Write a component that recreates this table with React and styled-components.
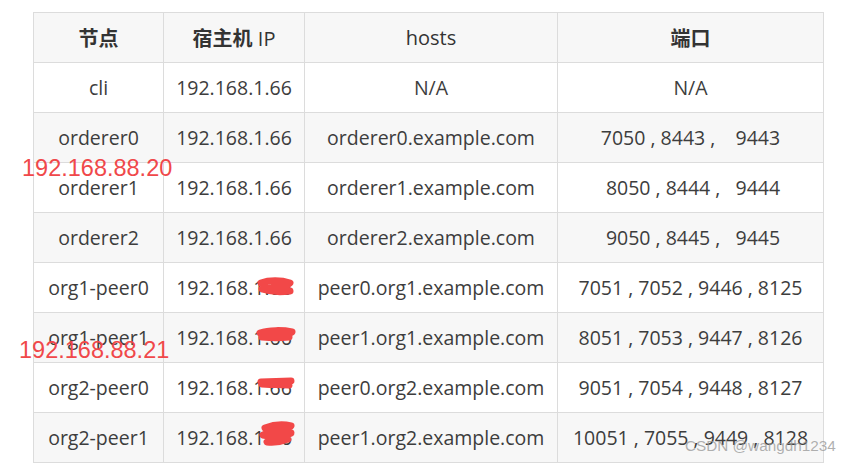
import React from "react";
import styled, { createGlobalStyle } from "styled-components";

const Global = createGlobalStyle`
  html, body { margin: 0; padding: 0; background: #fff; }
  body { font-family: "Open Sans", "Noto Sans CJK SC", sans-serif; }
`;

const Page = styled.div`
  position: relative;
  width: 855px;
  height: 465px;
  padding: 12px 0 0 33px;
  box-sizing: border-box;
  overflow: hidden;
`;

const Table = styled.table`
  border-collapse: collapse;
  table-layout: fixed;
  width: 791px;
  color: #3d3d3d;
  font-size: 19.5px;
`;

const Th = styled.th`
  height: 49px;
  padding: 0;
  border: 1px solid #dcdcdc;
  background: #f7f7f7;
  font-weight: 400;
  font-size: 20px;
  text-align: center;
  color: #333;
`;

const Cjk = styled.span`
  font-weight: 700;
  font-family: "Noto Sans CJK SC", sans-serif;
`;

const Tr = styled.tr`
  background: ${(p) => (p.$striped ? "#f7f7f7" : "#fff")};
`;

const Td = styled.td`
  height: 49px;
  padding: 0;
  border: 1px solid #dcdcdc;
  text-align: center;
  white-space: pre;
`;

const IpCell = styled.span`
  position: relative;
  display: inline-block;
  line-height: 26px;
`;

const Scribble = styled.svg`
  position: absolute;
  right: -3px;
  top: ${(p) => p.$top}px;
  width: 38px;
  height: ${(p) => p.$h}px;
  overflow: visible;
`;

const Note = styled.div`
  position: absolute;
  left: ${(p) => p.$x}px;
  top: ${(p) => p.$y}px;
  color: #f0484a;
  font-size: 23.5px;
  font-family: "Liberation Sans", Arial, sans-serif;
  line-height: 1;
`;

const Watermark = styled.div`
  position: absolute;
  left: 685px;
  top: 437px;
  color: rgba(150, 150, 150, 0.75);
  font-size: 15.3px;
  font-family: "Liberation Sans", Arial, sans-serif;
`;

const rows = [
  ["cli", "192.168.1.66", "N/A", "N/A", 0],
  ["orderer0", "192.168.1.66", "orderer0.example.com", "7050 , 8443 ,    9443", 0],
  ["orderer1", "192.168.1.66", "orderer1.example.com", " 8050 , 8444 ,   9444", 0],
  ["orderer2", "192.168.1.66", "orderer2.example.com", " 9050 , 8445 ,   9445", 0],
  ["org1-peer0", "192.168.1.66", "peer0.org1.example.com", "7051 , 7052 , 9446 , 8125", 1],
  ["org1-peer1", "192.168.1.66", "peer1.org1.example.com", "8051 , 7053 , 9447 , 8126", 2],
  ["org2-peer0", "192.168.1.66", "peer0.org2.example.com", "9051 , 7054 , 9448 , 8127", 3],
  ["org2-peer1", "192.168.1.66", "peer1.org2.example.com", "10051 , 7055 , 9449 , 8128", 4],
];

const scribbles = {
  1: { top: 3, h: 19, d: "M4 5 C12 2 24 2 33 5 C30 9 14 10 5 11 C14 14 26 14 33 13" },
  2: { top: 3, h: 14, d: "M3 5 C12 2 26 2 35 4 C30 8 16 9 5 9 C14 10 24 10 32 9" },
  3: { top: 3, h: 10, d: "M4 4 L34 3 C30 6 14 7 5 6 L32 7" },
  4: { top: -3, h: 25, d: "M8 6 C16 3 26 2 34 4 C26 8 14 10 6 13 C14 15 26 12 34 11 C26 15 16 18 10 20 C18 21 26 19 31 17" },
};

function Scrib({ k }) {
  const s = scribbles[k];
  return (
    <Scribble $top={s.top} $h={s.h} viewBox={`0 0 38 ${s.h}`}>
      <path d={s.d} fill="none" stroke="#f24848" strokeWidth="7" strokeLinecap="round" strokeLinejoin="round" />
    </Scribble>
  );
}

export default function App() {
  return (
    <>
      <Global />
      <Page>
        <Table>
          <colgroup>
            <col style={{ width: 130 }} />
            <col style={{ width: 141 }} />
            <col style={{ width: 253 }} />
            <col style={{ width: 266 }} />
          </colgroup>
          <thead>
            <tr>
              <Th><Cjk>节点</Cjk></Th>
              <Th><Cjk>宿主机</Cjk> IP</Th>
              <Th>hosts</Th>
              <Th><Cjk>端口</Cjk></Th>
            </tr>
          </thead>
          <tbody>
            {rows.map((r, i) => (
              <Tr key={r[0]} $striped={i % 2 === 1}>
                <Td>{r[0]}</Td>
                <Td>
                  <IpCell>
                    {r[1]}
                    {r[4] ? <Scrib k={r[4]} /> : null}
                  </IpCell>
                </Td>
                <Td>{r[2]}</Td>
                <Td>{r[3]}</Td>
              </Tr>
            ))}
          </tbody>
        </Table>
        <Note $x={22} $y={157}>192.168.88.20</Note>
        <Note $x={19} $y={339}>192.168.88.21</Note>
        <Watermark>CSDN @wangdh1234</Watermark>
      </Page>
    </>
  );
}
